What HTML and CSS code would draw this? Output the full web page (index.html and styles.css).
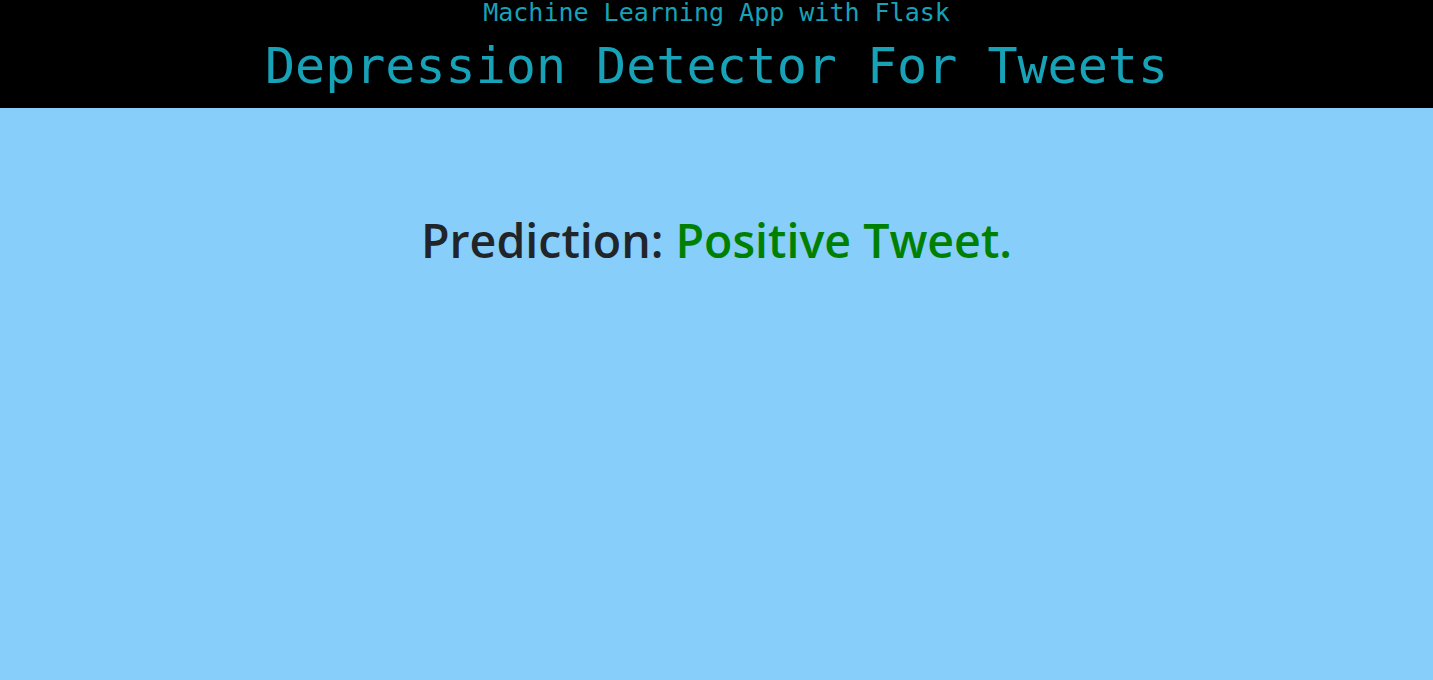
FILE: index.html
```html
<!DOCTYPE html>
<html lang="en">
<head>
<meta charset="utf-8">
<title>Depression Detector For Tweets</title>
<link rel="stylesheet" href="styles.css">
</head>
<body>
<header class="header">
  <div class="subtitle">Machine Learning App with Flask</div>
  <h1 class="title">Depression Detector For Tweets</h1>
</header>
<main class="result">
  <h2 class="prediction">Prediction: <span class="positive">Positive Tweet.</span></h2>
</main>
</body>
</html>
```

FILE: styles.css
```css
html, body {
  margin: 0;
  padding: 0;
}
body {
  background: #87cefa;
  min-height: 680px;
  font-family: "Open Sans", "Noto Sans", sans-serif;
}
.header {
  background: #000;
  height: 108px;
  text-align: center;
  color: #17a2b8;
  font-family: "DejaVu Sans Mono", "Liberation Mono", monospace;
}
.subtitle {
  font-size: 25px;
  line-height: 25px;
}
.title {
  margin: 0;
  padding-top: 11px;
  font-size: 50px;
  font-weight: normal;
  line-height: 60px;
}
.result {
  padding-top: 100px;
  text-align: center;
}
.prediction {
  margin: 0;
  font-size: 46.5px;
  font-weight: 600;
  color: #212529;
  line-height: 64px;
}
.positive {
  color: #008000;
}
```
